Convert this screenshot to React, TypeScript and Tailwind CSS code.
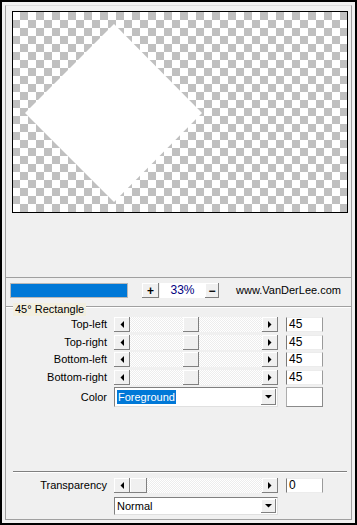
import React from "react";

const btn =
  "flex items-center justify-center bg-[#f0f0f0] shadow-[inset_-1px_-1px_#808080,inset_1px_1px_#ffffff]";

const Tri = ({ dir }: { dir: "l" | "r" | "d" }) => {
  if (dir === "l")
    return (
      <svg width="4" height="7" viewBox="0 0 4 7">
        <polygon points="4,0 4,7 0.5,3.5" fill="#000" />
      </svg>
    );
  if (dir === "r")
    return (
      <svg width="4" height="7" viewBox="0 0 4 7">
        <polygon points="0,0 0,7 3.5,3.5" fill="#000" />
      </svg>
    );
  return (
    <svg width="7" height="4" viewBox="0 0 7 4">
      <polygon points="0,0 7,0 3.5,3.5" fill="#000" />
    </svg>
  );
};

const ScrollBar = ({ thumbClass }: { thumbClass: string }) => (
  <div className="flex h-[15px] w-[164px] ml-[7px]">
    <div className={btn + " w-[16px] h-full"}>
      <Tri dir="l" />
    </div>
    <div className="flex-1 h-full flex bg-[image:conic-gradient(#ededed_25%,#ffffff_0_50%,#ededed_0_75%,#ffffff_0)] bg-[length:2px_2px]">
      <div className={thumbClass + " h-full " + btn} />
    </div>
    <div className={btn + " w-[16px] h-full"}>
      <Tri dir="r" />
    </div>
  </div>
);

const NumBox = ({ v }: { v: string }) => (
  <div className="ml-[8px] w-[37px] h-[15px] bg-white border-l border-r border-l-[#7a7a7a] border-r-[#9a9a9a] border-y border-y-[#ececec] pl-[2px] leading-[13px] text-[12px]">
    {v}
  </div>
);

const Label = ({ t }: { t: string }) => (
  <div className="w-[101px] text-right leading-[15px] text-[11px] whitespace-nowrap">{t}</div>
);

const SliderRow = ({ t, v }: { t: string; v: string }) => (
  <div className="flex items-center h-[15px]">
    <Label t={t} />
    <ScrollBar thumbClass="ml-[53px] w-[16px]" />
    <NumBox v={v} />
  </div>
);

const DropDown = ({ children, h }: { children: React.ReactNode; h: string }) => (
  <div
    className={
      "ml-[7px] w-[164px] flex items-center bg-white border-l border-t border-l-[#808080] border-t-[#808080] border-r border-b border-r-[#e0e0e0] border-b-[#e0e0e0] " +
      h
    }
  >
    <div className="flex-1 flex items-center pl-[2px] text-[11px]">{children}</div>
    <div className={btn + " w-[15px] h-[calc(100%-2px)] mr-[1px]"}>
      <Tri dir="d" />
    </div>
  </div>
);

export default function App() {
  return (
    <div className="w-[357px] h-[525px] border-2 border-black bg-[#f0f0f0] font-['Liberation_Sans',Arial,sans-serif] text-[11px] text-black overflow-hidden">
      <div className="ml-[3px] mt-[3px] w-[347px] h-[515px] border border-[#a0a0a0] border-t-[#dcdcdc] flex flex-col">
        {/* preview section */}
        <div className="h-[272px] border-b border-[#a0a0a0] pl-[6px] pt-[5px]">
          <div className="relative w-[336px] h-[202px] border border-black bg-[image:conic-gradient(#c0c0c0_25%,#ffffff_0_50%,#c0c0c0_0_75%,#ffffff_0)] bg-[length:16px_16px] bg-[position:-1px_0px]">
            <svg className="absolute left-0 top-0" width="334" height="200" viewBox="0 0 334 200">
              <polygon points="101,12 189,101 101,190 12,101" fill="#ffffff" />
            </svg>
          </div>
        </div>

        {/* toolbar */}
        <div className="mt-[5px] flex items-center h-[15px]">
          <div className="ml-[4px] w-[118px] h-[15px] border border-[#b8b8b8] bg-[#0078d7]" />
          <div className={btn + " ml-[14px] w-[17px] h-[15px] text-[12px] font-bold leading-none"}>+</div>
          <div className="ml-[1px] w-[45px] h-[15px] bg-white text-center leading-[15px] text-[12px] text-[#000080]">33%</div>
          <div className={btn + " w-[14px] h-[15px] text-[12px] font-bold leading-none"}>−</div>
          <div className="ml-[17px] leading-[15px] whitespace-nowrap">www.VanDerLee.com</div>
        </div>

        {/* group header */}
        <div className="mt-[5px] h-[13px] flex items-start">
          <div className="w-[7px] mt-[3px] h-[2px] border-t border-b border-t-[#a0a0a0] border-b-white" />
          <div className="h-[13px] leading-[13px] px-[2px] bg-[#f3efdf] whitespace-nowrap">45° Rectangle</div>
          <div className="flex-1 mt-[3px] h-[2px] border-t border-b border-t-[#a0a0a0] border-b-white" />
        </div>

        {/* sliders */}
        <div className="mt-[1px] flex flex-col gap-[2.5px]">
          <SliderRow t="Top-left" v="45" />
          <SliderRow t="Top-right" v="45" />
          <SliderRow t="Bottom-left" v="45" />
          <SliderRow t="Bottom-right" v="45" />
        </div>

        {/* color */}
        <div className="mt-[2.5px] flex items-center h-[20px]">
          <Label t="Color" />
          <DropDown h="h-[20px]">
            <span className="bg-[#0078d7] text-white leading-[14px] px-[1px]">Foreground</span>
          </DropDown>
          <div className="ml-[8px] w-[37px] h-[20px] bg-white border border-[#adadad] border-r-[#8a8a8a] border-b-[#8a8a8a]" />
        </div>

        {/* separator */}
        <div className="mt-[64px] ml-[7px] w-[334px] h-[2px] border-t border-b border-t-[#808080] border-b-white" />

        {/* transparency */}
        <div className="mt-[5px] flex items-center h-[15px]">
          <Label t="Transparency" />
          <ScrollBar thumbClass="w-[17px]" />
          <NumBox v="0" />
        </div>

        {/* blend mode */}
        <div className="mt-[4px] flex">
          <div className="w-[101px]" />
          <DropDown h="h-[18px]">
            <span className="leading-[14px]">Normal</span>
          </DropDown>
        </div>
      </div>
    </div>
  );
}
